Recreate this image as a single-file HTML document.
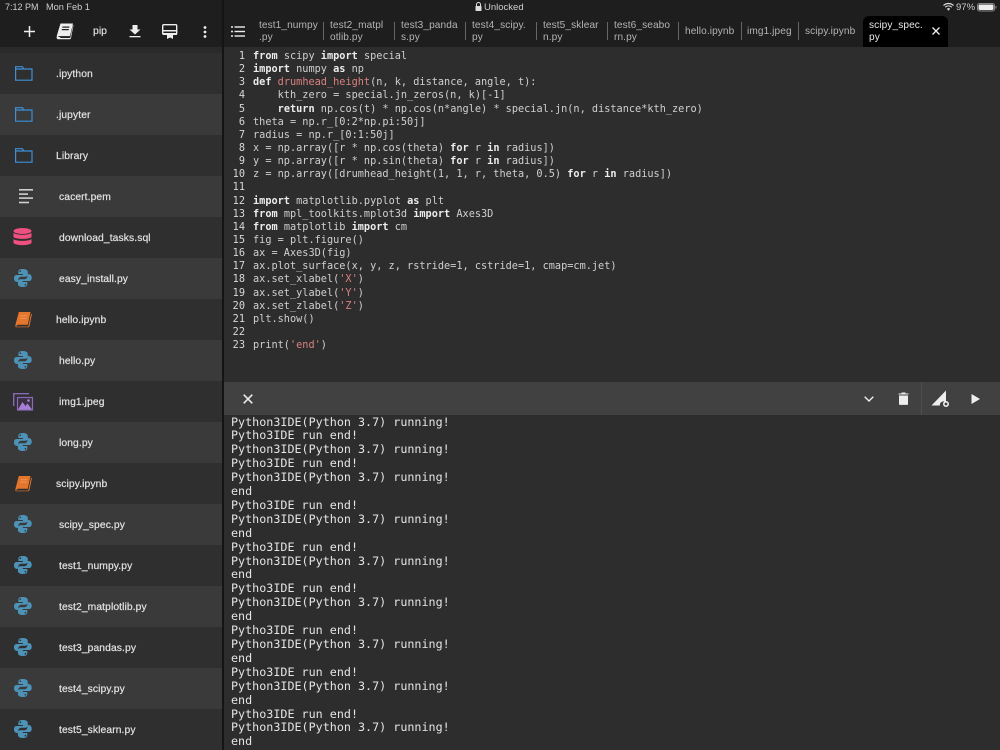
<!DOCTYPE html>
<html><head><meta charset="utf-8"><style>
html,body{margin:0;padding:0;background:#2d2d2d;}
#r{position:relative;width:1000px;height:750px;overflow:hidden;background:#2d2d2d;font-family:"Liberation Sans",sans-serif;color:#ddd;}
.a{position:absolute;white-space:pre;}
.row{position:absolute;left:0;width:222px;height:41px;}
.f{position:absolute;font-size:10.3px;font-weight:normal;color:#e2e2e2;line-height:14px;white-space:pre;letter-spacing:.1px;-webkit-text-stroke:.2px #e2e2e2;margin-top:2px;}
.t{position:absolute;font-size:10.1px;font-weight:normal;color:#b4b4b4;line-height:12.4px;white-space:pre;letter-spacing:.1px;margin-top:.5px;}
.s{position:absolute;width:1px;height:18px;top:22px;background:#666;}
#code{position:absolute;left:253px;top:50px;font:10.24px/13.135px "DejaVu Sans Mono",monospace;color:#d0d0d0;white-space:pre;}
#code b{color:#ececec;font-weight:bold;}
#code i{font-style:normal;color:#d98080;}
#nums{position:absolute;left:225px;width:20px;top:50px;font:10.24px/13.135px "DejaVu Sans Mono",monospace;color:#d8d8d8;text-align:right;white-space:pre;}
#con{position:absolute;left:231px;top:415.500px;font:11.72px/13.9px "DejaVu Sans Mono",monospace;color:#e4e4e4;white-space:pre;}
svg{position:absolute;overflow:visible;}
</style></head><body><div id="r">
<svg width="0" height="0" style="position:absolute"><defs>
<g id="py"><path fill="#4d93b8" d="M8.700 0C4.600 0 4.400 1.700 4.400 3v2h4.500v1H2.600C.9 6 0 7.400 0 9.300s1 3.600 2.600 3.600h1.700v-2.200c0-1.700 1.500-3 3-3h4.200c1.300 0 2.300-1 2.300-2.300V3c0-1.700-1.500-3-5.100-3zM6.300 1.400a.8.8 0 1 1 0 1.700.8.8 0 0 1 0-1.700z"/><path fill="#4d93b8" d="M9 18c4.100 0 4.300-1.700 4.300-3v-2H8.800v-1h6.300c1.700 0 2.600-1.400 2.600-3.300s-1-3.600-2.600-3.600h-1.700v2.200c0 1.700-1.500 3-3 3H6.200c-1.300 0-2.300 1-2.300 2.300V15c0 1.700 1.500 3 5.100 3zm2.400-1.400a.8.8 0 1 1 0-1.700.8.8 0 0 1 0 1.700z"/></g>
<g id="fo"><path fill="none" stroke="#3d8fd6" stroke-width="1.200" d="M.6 14.200V.7H7.500L8.700 3H17V14.200zM.6 3H8.700"/></g>
<g id="bk"><path fill="#e3762c" d="M3.800 0H15.500L12.800 12.800H2.800L.2 14.800 .6 12.300z"/><path fill="#e3762c" d="M17 1.800L14.500 14c-.2 1-.8 1.300-1.500 1.300H1.700c-.9 0-1.700-.2-1-.7H13.300L16 2z"/><path fill="#ffb27c" d="M5.800 3.200H12.300L12 4.200H5.500zM5.300 5.700H11.800L11.600 6.700H5.100z" opacity=".55"/></g>
</defs></svg>

<!-- top bars -->
<div class="a" style="left:0;top:0;width:1000px;height:47px;background:#1e1e1e"></div>
<div class="a" style="left:0;top:47px;width:222px;height:6px;background:#2a2a2a"></div>
<div class="a" style="left:222px;top:0;width:2px;height:750px;background:#141414"></div>

<div class="a" style="left:5px;top:2px;font-size:9px;line-height:11px;color:#cfcfcf;">7:12 PM</div>
<div class="a" style="left:46px;top:2px;font-size:9.2px;line-height:11px;color:#cfcfcf;">Mon Feb 1</div>
<svg style="left:475px;top:2px" width="7" height="9"><path d="M1.500 4V2.500a2 2 0 0 1 4 0V4" fill="none" stroke="#ddd" stroke-width="1"/><rect x=".5" y="4" width="6" height="5" rx=".6" fill="#ddd"/></svg>
<div class="a" style="left:484px;top:2px;font-size:9.5px;line-height:11px;color:#cfcfcf;">Unlocked</div>
<svg style="left:943px;top:3px" width="11" height="8"><path d="M.5 2.500C3.500-.2 7.500-.2 10.500 2.500M2.200 4.200c2-1.700 4.600-1.700 6.600 0" fill="none" stroke="#ddd" stroke-width="1.200"/><path d="M3.800 5.700c1-.8 2.400-.8 3.400 0L5.500 7.700z" fill="#ddd"/></svg>
<div class="a" style="left:956px;top:2px;font-size:9.500px;line-height:11px;color:#cfcfcf;">97%</div>
<svg style="left:977px;top:3px" width="20" height="9"><rect x=".5" y=".5" width="17" height="7.500" rx="2" fill="none" stroke="#888"/><rect x="1.500" y="1.500" width="15" height="5.500" rx="1.200" fill="#eee"/><rect x="18.500" y="3" width="1" height="2.500" fill="#888"/></svg>

<!-- toolbar icons -->
<svg style="left:24px;top:26px" width="11" height="11"><path d="M5.500 0V11M0 5.500H11" stroke="#eee" stroke-width="1.500"/></svg>
<svg style="left:56px;top:23px" width="18" height="17"><path d="M4.500 .5H17L14 13H3L.5 15 1 12z" fill="#eee"/><path d="M17.500 2L15 15c-.2.900-.8 1.300-1.500 1.300H2.500C1 16.300.3 15.200 1 14.500c.5-.5 1-.6 2-.6H14.500L17 2z" fill="#eee"/><path d="M5 13.900H14.500L14.200 15H3.500z" fill="#222"/><path d="M6.500 3.500H13.500L13.200 4.700H6.200zM5.900 6H13L12.700 7.200H5.600z" fill="#222"/></svg>
<div class="a" style="left:93px;top:24px;font-size:10.500px;line-height:14px;color:#ddd;-webkit-text-stroke:.2px #ddd;">pip</div>
<svg style="left:129px;top:25px" width="12" height="13"><path d="M3.500 0H8.500V4.500H11.500L6 9.500 .5 4.500H3.500z" fill="#eee"/><rect x=".5" y="11" width="11" height="1.300" fill="#eee"/></svg>
<svg style="left:162px;top:24px" width="16" height="15"><rect x=".7" y=".7" width="14" height="9.600" rx="1" fill="none" stroke="#eee" stroke-width="1.400"/><rect x="1" y="6" width="14" height="1.500" fill="#eee"/><rect x="1" y="9" width="14" height="2" fill="#eee"/><path d="M5 11H11V15L8 13.500 5 15z" fill="#eee"/></svg>
<svg style="left:203px;top:26px" width="4" height="12"><circle cx="2" cy="1.500" r="1.400" fill="#eee"/><circle cx="2" cy="6" r="1.400" fill="#eee"/><circle cx="2" cy="10.500" r="1.400" fill="#eee"/></svg>
<svg style="left:231px;top:26px" width="14" height="11"><g fill="#eee"><circle cx="1" cy="1" r="1"/><circle cx="1" cy="5.500" r="1"/><circle cx="1" cy="10" r="1"/><rect x="3.500" y=".3" width="10.500" height="1.400"/><rect x="3.500" y="4.800" width="10.500" height="1.400"/><rect x="3.500" y="9.300" width="10.500" height="1.400"/></g></svg>

<!-- tabs -->
<div class="t" style="left:259px;top:19px">test1_numpy
.py</div><div class="s" style="left:323px"></div>
<div class="t" style="left:330px;top:19px">test2_matpl
otlib.py</div><div class="s" style="left:394px"></div>
<div class="t" style="left:401px;top:19px">test3_panda
s.py</div><div class="s" style="left:465px"></div>
<div class="t" style="left:472px;top:19px">test4_scipy.
py</div><div class="s" style="left:536px"></div>
<div class="t" style="left:543px;top:19px">test5_sklear
n.py</div><div class="s" style="left:607px"></div>
<div class="t" style="left:614px;top:19px">test6_seabo
rn.py</div><div class="s" style="left:678px"></div>
<div class="t" style="left:685px;top:25px">hello.ipynb</div><div class="s" style="left:741px"></div>
<div class="t" style="left:747px;top:25px">img1.jpeg</div><div class="s" style="left:798px"></div>
<div class="t" style="left:805px;top:25px">scipy.ipynb</div>
<div class="a" style="left:863px;top:16px;width:85px;height:31px;background:#000;border-radius:6px 6px 0 0"></div>
<div class="t" style="left:869px;top:19px;color:#e8e8e8">scipy_spec.
py</div>
<svg style="left:932px;top:27px" width="8" height="8"><path d="M.5 .5L7.500 7.500M7.500 .5L.5 7.500" stroke="#eee" stroke-width="1.300"/></svg>

<!-- file rows -->
<div class="row" style="top:53px;background:#2f2f2f"></div>
<div class="row" style="top:94px;background:#3a3a3a"></div>
<div class="row" style="top:135px;background:#2f2f2f"></div>
<div class="row" style="top:176px;background:#3a3a3a"></div>
<div class="row" style="top:217px;background:#2f2f2f"></div>
<div class="row" style="top:258px;background:#3a3a3a"></div>
<div class="row" style="top:299px;background:#2f2f2f"></div>
<div class="row" style="top:340px;background:#3a3a3a"></div>
<div class="row" style="top:381px;background:#2f2f2f"></div>
<div class="row" style="top:422px;background:#3a3a3a"></div>
<div class="row" style="top:463px;background:#2f2f2f"></div>
<div class="row" style="top:504px;background:#3a3a3a"></div>
<div class="row" style="top:545px;background:#2f2f2f"></div>
<div class="row" style="top:586px;background:#3a3a3a"></div>
<div class="row" style="top:627px;background:#2f2f2f"></div>
<div class="row" style="top:668px;background:#3a3a3a"></div>
<div class="row" style="top:709px;background:#2f2f2f"></div>

<div class="f" style="left:56px;top:66px">.ipython</div>
<div class="f" style="left:56px;top:107px">.jupyter</div>
<div class="f" style="left:56px;top:148px">Library</div>
<div class="f" style="left:59px;top:189px">cacert.pem</div>
<div class="f" style="left:59px;top:230px">download_tasks.sql</div>
<div class="f" style="left:59px;top:271px">easy_install.py</div>
<div class="f" style="left:56px;top:312px">hello.ipynb</div>
<div class="f" style="left:59px;top:353px">hello.py</div>
<div class="f" style="left:59px;top:394px">img1.jpeg</div>
<div class="f" style="left:59px;top:435px">long.py</div>
<div class="f" style="left:56px;top:476px">scipy.ipynb</div>
<div class="f" style="left:59px;top:517px">scipy_spec.py</div>
<div class="f" style="left:59px;top:558px">test1_numpy.py</div>
<div class="f" style="left:59px;top:599px">test2_matplotlib.py</div>
<div class="f" style="left:59px;top:640px">test3_pandas.py</div>
<div class="f" style="left:59px;top:681px">test4_scipy.py</div>
<div class="f" style="left:59px;top:722px">test5_sklearn.py</div>

<svg style="left:15px;top:66px" width="18" height="16"><use href="#fo"/></svg>
<svg style="left:15px;top:107px" width="18" height="16"><use href="#fo"/></svg>
<svg style="left:15px;top:148px" width="18" height="16"><use href="#fo"/></svg>
<svg style="left:19px;top:189px" width="15" height="15"><g fill="#cfcfcf"><rect y="0" width="14" height="1.600"/><rect y="4.300" width="9" height="1.600"/><rect y="8.300" width="14" height="1.600"/><rect y="12.700" width="10" height="1.600"/></g></svg>
<svg style="left:13px;top:228px" width="19" height="19"><g fill="#f0507f"><ellipse cx="9.500" cy="3" rx="9" ry="3"/><path d="M.5 4.800C3 7.500 16 7.500 18.500 4.800V9c-2 2.500-16 2.500-18 0z"/><path d="M.5 11C3 13.500 16 13.500 18.500 11V15c-2 2.800-16 2.800-18 0z"/></g></svg>
<svg style="left:14px;top:269px" width="18" height="18"><use href="#py"/></svg>
<svg style="left:15px;top:312px" width="17" height="16"><use href="#bk"/></svg>
<svg style="left:14px;top:351px" width="18" height="18"><use href="#py"/></svg>
<svg style="left:13px;top:393px" width="20" height="18"><path d="M.7 13V.7H16" fill="none" stroke="#8a68b8" stroke-width="1.400"/><rect x="4.500" y="4.500" width="15" height="12.500" fill="#3a3040" stroke="#8a68b8" stroke-width="1.200"/><path d="M5 16.500L9.500 9 12.500 13 14.500 10.500 19 16.500z" fill="#a57fd6"/><circle cx="15.500" cy="7.500" r="1.300" fill="#a57fd6"/></svg>
<svg style="left:14px;top:433px" width="18" height="18"><use href="#py"/></svg>
<svg style="left:15px;top:476px" width="17" height="16"><use href="#bk"/></svg>
<svg style="left:14px;top:515px" width="18" height="18"><use href="#py"/></svg>
<svg style="left:14px;top:556px" width="18" height="18"><use href="#py"/></svg>
<svg style="left:14px;top:597px" width="18" height="18"><use href="#py"/></svg>
<svg style="left:14px;top:638px" width="18" height="18"><use href="#py"/></svg>
<svg style="left:14px;top:679px" width="18" height="18"><use href="#py"/></svg>
<svg style="left:14px;top:720px" width="18" height="18"><use href="#py"/></svg>

<!-- code -->
<div id="nums">1
2
3
4
5
6
7
8
9
10
11
12
13
14
15
16
17
18
19
20
21
22
23</div>
<div id="code"><b>from</b> scipy <b>import</b> special
<b>import</b> numpy <b>as</b> np
<b>def</b> <i>drumhead_height</i>(n, k, distance, angle, t):
    kth_zero = special.jn_zeros(n, k)[-1]
    <b>return</b> np.cos(t) * np.cos(n*angle) * special.jn(n, distance*kth_zero)
theta = np.r_[0:2*np.pi:50j]
radius = np.r_[0:1:50j]
x = np.array([r * np.cos(theta) <b>for</b> r <b>in</b> radius])
y = np.array([r * np.sin(theta) <b>for</b> r <b>in</b> radius])
z = np.array([drumhead_height(1, 1, r, theta, 0.5) <b>for</b> r <b>in</b> radius])

<b>import</b> matplotlib.pyplot <b>as</b> plt
<b>from</b> mpl_toolkits.mplot3d <b>import</b> Axes3D
<b>from</b> matplotlib <b>import</b> cm
fig = plt.figure()
ax = Axes3D(fig)
ax.plot_surface(x, y, z, rstride=1, cstride=1, cmap=cm.jet)
ax.set_xlabel(<i>'X'</i>)
ax.set_ylabel(<i>'Y'</i>)
ax.set_zlabel(<i>'Z'</i>)
plt.show()

print(<i>'end'</i>)</div>

<!-- console bar -->
<div class="a" style="left:224px;top:382px;width:776px;height:33px;background:#414141"></div>
<div class="a" style="left:921px;top:382px;width:1px;height:33px;background:#4f4f4f"></div>
<svg style="left:243px;top:394px" width="10" height="10"><path d="M.7 .7L9.300 9.300M9.300 .7L.7 9.300" stroke="#eee" stroke-width="1.500"/></svg>
<svg style="left:864px;top:396px" width="10" height="6"><path d="M.7 .7L5 5 9.300 .7" fill="none" stroke="#eee" stroke-width="1.400"/></svg>
<svg style="left:898px;top:392px" width="11" height="13"><path d="M3.500 .5H7.500V1.500H10.500V2.500H.5V1.500H3.500z" fill="#eee"/><path d="M1 3.500H10V12c0 .5-.4.900-.9.900H1.900C1.400 12.900 1 12.500 1 12z" fill="#eee"/></svg>
<svg style="left:931px;top:390px" width="19" height="18"><path d="M15 .5V12.500A3.500 3.500 0 0 0 9 15.500H.5z" fill="#eee"/><circle cx="15" cy="14" r="2.200" fill="none" stroke="#eee" stroke-width="1.600"/></svg>
<svg style="left:971px;top:394px" width="10" height="10"><path d="M.5 0L9 5 .5 10z" fill="#eee"/></svg>

<div id="con">Python3IDE(Python 3.7) running!
Pytho3IDE run end!
Python3IDE(Python 3.7) running!
Pytho3IDE run end!
Python3IDE(Python 3.7) running!
end
Pytho3IDE run end!
Python3IDE(Python 3.7) running!
end
Pytho3IDE run end!
Python3IDE(Python 3.7) running!
end
Pytho3IDE run end!
Python3IDE(Python 3.7) running!
end
Pytho3IDE run end!
Python3IDE(Python 3.7) running!
end
Pytho3IDE run end!
Python3IDE(Python 3.7) running!
end
Pytho3IDE run end!
Python3IDE(Python 3.7) running!
end</div>
</div></body></html>
